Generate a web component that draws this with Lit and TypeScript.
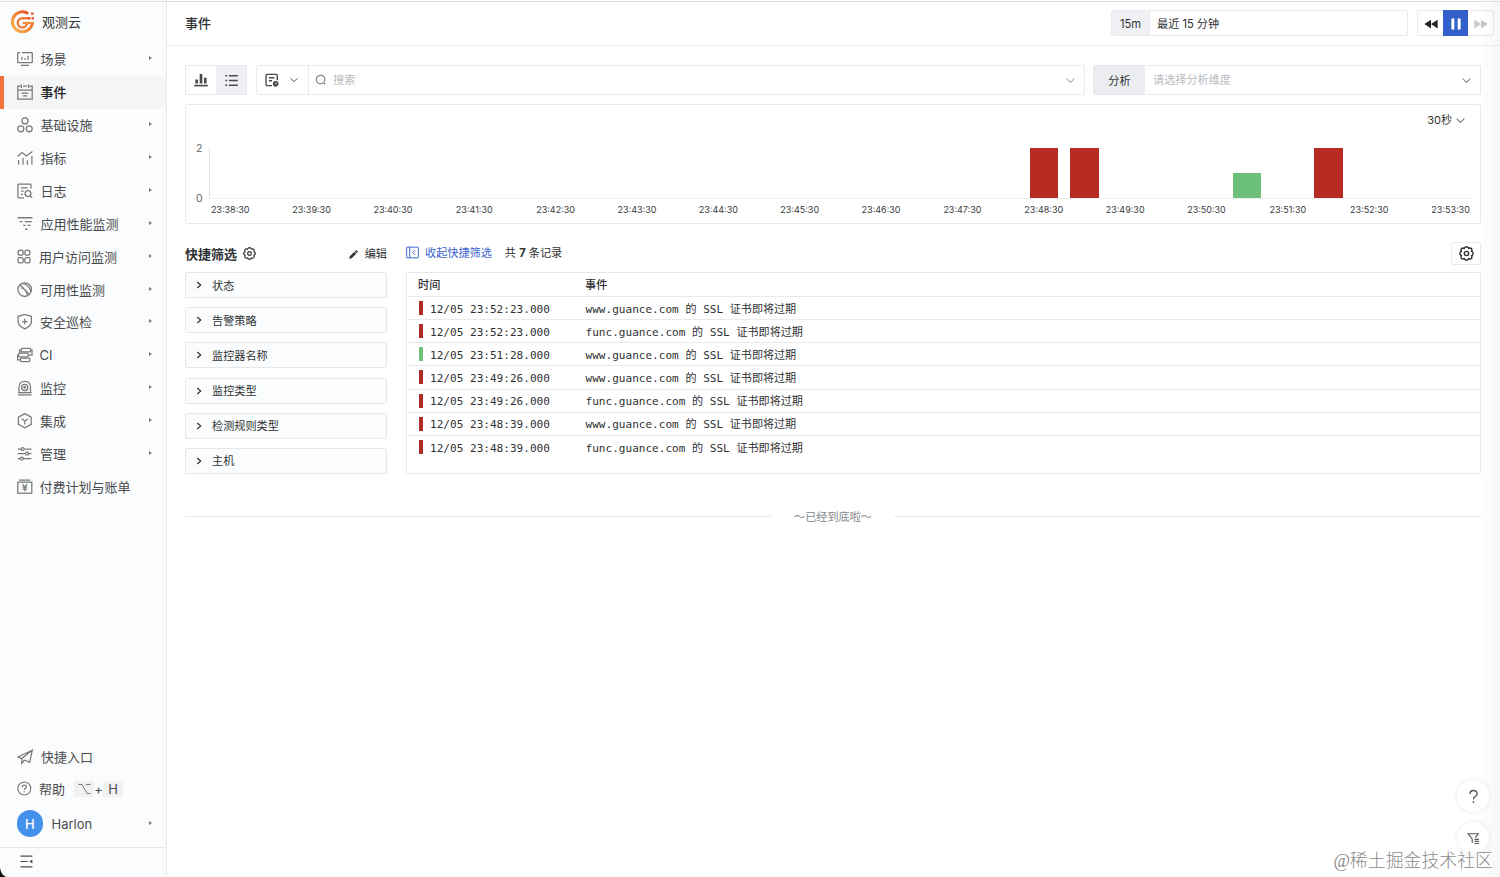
import { LitElement, html, css, svg, nothing } from "lit";
import { customElement, property } from "lit/decorators.js";

const ICONS: Record<string, unknown> = {
  scene: svg`<path d="M3.2 1.6H1.4Q.7 1.6.7 2.3V11Q.7 11.7 1.4 11.7H14.6Q15.3 11.7 15.3 11V2.3Q15.3 1.6 14.6 1.6H5"/><path d="M4.9 6v3M8 7.2V9M11.1 4.8V9M3.9 14.3H12"/>`,
  event: svg`<path d="M3.5 2.2H.8V15.2H15.2V2.2H12.6M6 2.2H10.2M.8 6H15.2M4.3.6V4M11.7.6V4M4.6 9H11.4M6 11.8H10"/>`,
  infra: svg`<circle cx="8" cy="3.9" r="3"/><circle cx="3.8" cy="11.8" r="3"/><circle cx="12.2" cy="11.8" r="3"/>`,
  metric: svg`<path d="M.5 6.5 5.2 2.6 9.3 6 15.4 1.6M1.6 10V14.8M6 8V14.8M10.4 10.2V14.8M14.9 6V14.8"/>`,
  log: svg`<path d="M7 14.8H1.6Q.9 14.8.9 14V2Q.9 1.2 1.7 1.2H13.2Q14 1.2 14 2V5.6M4 4.8H10.6M4 8.2H6.6M4 11.4H6"/><circle cx="11" cy="10.6" r="2.9"/><path d="M13.1 12.7 15.2 14.9"/>`,
  apm: svg`<path d="M.5 1.8H15.5M2.6 5.6H5.4M7.8 5.6H14.8M6.2 9.4H8.4M10.6 9.4H13.4M8 13.2H10.4" stroke-width="1.4"/>`,
  rum: svg`<circle cx="3.6" cy="3.7" r="2.6"/><circle cx="10.4" cy="3.7" r="2.6"/><rect x="1" y="8.7" width="5.2" height="5.2" rx="1.6"/><rect x="7.8" y="8.7" width="5.2" height="5.2" rx="1.6"/>`,
  avail: svg`<circle cx="7.7" cy="7.6" r="6.8"/><path d="M3 2.8 12.4 12.4M5.4 1.5Q12.8 3.1 13.9 10M4.3 5.6Q9.4 6.9 10.2 13.4"/>`,
  shield: svg`<path d="M7.8.5 14.4 2.3V7.6Q14.4 12.2 7.8 14.8 1.1 12.2 1.1 7.6V2.3ZM7.8 4.8V10.2M5.1 7.5H10.5"/>`,
  ci: svg`<rect x="4.2" y="1.3" width="9.4" height="3.6" rx="1"/><rect x="1.6" y="6.2" width="9.6" height="3.6" rx="1"/><rect x="3.4" y="11" width="9.4" height="3.6" rx="1"/><path d="M13.6 3H15V8H11.2M1.6 8H.6V12.8H3.4M4.2 3H2.6V6.2"/>`,
  monitor: svg`<path d="M2 12.5V7.3Q2 1.4 7.7 1.4 13.5 1.4 13.5 7.3V12.5M1 12.6H14.6M1 14.8H14.6"/><circle cx="7.7" cy="7.4" r="3.1"/><circle cx="7.7" cy="7.4" r=".8"/>`,
  integ: svg`<path d="M7.8.6 14.2 4.1V11.3L7.8 14.8 1.4 11.3V4.1ZM4.6 5.8 7.8 7.9 11 5.8M7.8 7.9V11.4"/>`,
  manage: svg`<path d="M.8 3H4M7.4 3H14.4M.8 7.7H8.4M11.8 7.7H14.4M.8 12.5H3.2M6.6 12.5H14.4"/><circle cx="5.7" cy="3" r="1.5"/><circle cx="10.1" cy="7.7" r="1.5"/><circle cx="4.9" cy="12.5" r="1.5"/>`,
  bill: svg`<rect x=".8" y="3.2" width="14" height="11"/><path d="M2.2 1.1H13.4M5.4 5.2 7.8 7.8 10.2 5.2M5.4 8.2H10.2M5.4 10.1H10.2M7.8 7.8V12.2"/>`,
  plane: svg`<path d="M15.2 1.2.9 7.9 4.8 9.6 15.2 1.2 12.7 13.4 7.6 11M4.8 9.6V14.4L7.6 11"/>`,
  help: svg`<circle cx="7.8" cy="8" r="6.9"/><path d="M5.6 6.6Q5.6 4.4 7.8 4.4 10 4.4 10 6.3 10 7.4 8.8 8 7.8 8.5 7.8 9.6M7.8 10.8V12.1" stroke-width="1.3"/>`,
  collapse: svg`<path d="M.6 1.4H15.2M.6 8H9.5M.6 14.6H15.2" stroke-width="1.5"/><path d="M15.2 5.6V10.4L11.4 8Z" fill="currentColor" stroke="none"/>`,
  bars: svg`<path d="M.2 14.4H15.8" stroke-width="1.9"/><path d="M3.1 7.4V12M8 1V12M12.9 5.4V12" stroke-width="3"/>`,
  list: svg`<path d="M4.8 2.2H15.8M4.8 8H15.8M4.8 13.8H15.8M.4 2.2H2.7M.4 8H2.7M.4 13.8H2.7" stroke-width="2"/>`,
  view: svg`<path d="M8 14.4H2.2Q1.2 14.4 1.2 13.4V2.6Q1.2 1.6 2.2 1.6H13Q14 1.6 14 2.6V8.4M4.4 5.4H10.8M4.4 8.8H8" stroke-width="1.6"/><circle cx="12.2" cy="12.4" r="3.2" fill="currentColor" stroke="none"/><path d="M12.2 10.8V12.4H13.8" stroke="#fff" stroke-width=".7"/>`,
  search: svg`<circle cx="7.4" cy="7.4" r="5.7" stroke-width="1.6"/><path d="M11.3 11.5 13.6 13.8" stroke-width="1.8"/>`,
  down: svg`<path d="M1.2 4.6 8 11.4 14.8 4.6" stroke-width="1.9"/>`,
  right: svg`<path d="M4.6 2 11.4 8 4.6 14" stroke-width="2.4"/>`,
  gear: svg`<path d="M6.3 1.6Q8 .2 9.7 1.6L10.3 2.6 11.6 2.2Q13.8 2.2 13.8 4.4L13.4 5.7 14.4 6.3Q15.8 8 14.4 9.7L13.4 10.3 13.8 11.6Q13.8 13.8 11.6 13.8L10.3 13.4 9.7 14.4Q8 15.8 6.3 14.4L5.7 13.4 4.4 13.8Q2.2 13.8 2.2 11.6L2.6 10.3 1.6 9.7Q.2 8 1.6 6.3L2.6 5.7 2.2 4.4Q2.2 2.2 4.4 2.2L5.7 2.6Z" stroke-width="1.5"/><circle cx="8" cy="8" r="2.3" stroke-width="1.5"/>`,
  pencil: svg`<path d="M.4 15.6 1.4 11.2 9.6 3 13 6.4 4.8 14.6ZM10.6 2 12 .6Q12.8 0 13.6.8L15.2 2.4Q16 3.2 15.4 4L14 5.4Z" fill="currentColor" stroke="none"/>`,
  fold: svg`<rect x=".8" y="1.4" width="14.4" height="13.2" rx=".6" stroke-width="1.2"/><path d="M4.6 1.4V14.6M11.2 5 8.2 8 11.2 11" stroke-width="1.2"/>`,
  rewind: svg`<path d="M8 3V13L.4 8ZM15.6 3V13L8 8Z" fill="currentColor" stroke="none"/>`,
  forward: svg`<path d="M8 3V13L15.6 8ZM.4 3V13L8 8Z" fill="currentColor" stroke="none"/>`,
  pause: svg`<path d="M4.4 1.6V14.4M11.6 1.6V14.4" stroke-width="3.4"/>`,
  filter: svg`<path d="M6.4 13.6V8.6L1.4 2.2H13.8L10.2 7M9.2 9H14.6M9.2 11.6H14.6M9.2 14.2H14.6" stroke-width="1.4"/>`,
  question: svg`<path d="M4.2 5.2Q4.2 1.6 8 1.6 11.8 1.6 11.8 5 11.8 6.8 9.8 8 8 9.1 8 11.2M8 13V14.8" stroke-width="1.5"/>`,
};

@customElement("ui-icon")
export class UiIcon extends LitElement {
  @property() name = "";
  @property({ type: Number }) size = 16;
  static styles = css`
    :host { display: inline-flex; flex: none; }
    .glyph { display: block; fill: none; stroke: currentColor; stroke-width: 1.25; }
  `;
  render() {
    return html`<svg class="glyph" width=${this.size} height=${this.size} viewBox="0 0 16 16">${ICONS[this.name]}</svg>`;
  }
}

const NAV: [string, string, boolean, number][] = [
  ["scene", "场景", true, 40.5],
  ["event", "事件", false, 40.5],
  ["infra", "基础设施", true, 40.5],
  ["metric", "指标", true, 40.5],
  ["log", "日志", true, 40.5],
  ["apm", "应用性能监测", true, 40.5],
  ["rum", "用户访问监测", true, 39],
  ["avail", "可用性监测", true, 40],
  ["shield", "安全巡检", true, 40],
  ["ci", "CI", true, 39.5],
  ["monitor", "监控", true, 40],
  ["integ", "集成", true, 40],
  ["manage", "管理", true, 40],
  ["bill", "付费计划与账单", false, 39.5],
];

@customElement("side-nav")
export class SideNav extends LitElement {
  static styles = css`
    :host { display: flex; flex-direction: column; box-sizing: border-box; width: 167px; height: 100%;
      padding-top: 1px; background: #fafcfd; border-right: 1px solid #e7e9eb; color: #4a4b4d; font-size: 13px; line-height: 18px; }
    .brand { display: flex; align-items: center; height: 42px; padding-left: 10px; gap: 7px; color: #333; }
    .items { display: flex; flex-direction: column; }
    .item { display: flex; align-items: center; box-sizing: border-box; height: 32.88px; padding: 0 14px 0 17px; }
    .item.active { background: linear-gradient(90deg, #f4733a 4px, #f4f5f7 4px); color: #222; font-weight: 500; }
    .item ui-icon, .help ui-icon, .quick ui-icon { color: #77797b; }
    .label { flex: 1; white-space: nowrap; }
    .arrow { width: 0; height: 0; border: 2.8px solid transparent; border-left: 3.4px solid #77797c; border-right: 0; margin-bottom: 2px; }
    .spacer { flex: 1; }
    .quick, .help { display: flex; align-items: center; height: 32px; padding-left: 17px; }
    .quick { gap: 8px; }
    .help { gap: 7px; }
    .keys { display: flex; align-items: center; margin-left: 2px; }
    .key { display: flex; align-items: center; justify-content: center; width: 20px; height: 16px; background: #f0f1f2; }
    .plus { width: 9px; text-align: center; font-size: 13px; }
    .user { display: flex; align-items: center; box-sizing: border-box; height: 42.5px; padding: 0 14px 4.5px 16.5px; }
    .avatar { display: flex; align-items: center; justify-content: center; width: 26.5px; height: 26.5px; border-radius: 50%;
      background: #4391ea; color: #fff; font-weight: 500; margin-right: 8.5px; }
    .foot { display: flex; align-items: center; box-sizing: border-box; height: 30px; padding: 0 0 2px 20px; border-top: 1px solid #e5e7e9; color: #4b4c4e; }
  `;
  render() {
    return html`
      <div class="brand">
        <svg width="25" height="25" viewBox="0 0 25 25" fill="none">
          <defs><linearGradient id="g" x1="0" y1="1" x2="1" y2="0"><stop offset="0" stop-color="#f9b64b"/><stop offset=".55" stop-color="#f08136"/><stop offset="1" stop-color="#e2442c"/></linearGradient></defs>
          <path d="M18.2 3.6A10 10 0 1 0 22.4 12.2" stroke="url(#g)" stroke-width="3"/>
          <path d="M18.6 8.3H12.4A4.6 4.6 0 1 0 17 13" stroke="#ee7d3a" stroke-width="2.5"/>
          <path d="M12.6 13H23.8" stroke="#f08a3c" stroke-width="2.3"/>
          <path d="M18 8.3H20.4M21.6 8.3H23.8M21 3.6H23.6" stroke="#e4502e" stroke-width="2.4"/>
        </svg>
        <span>观测云</span>
      </div>
      <div class="items">
        ${NAV.map(([icon, text, arrow, x]) => html`
          <div class="item ${icon === "event" ? "active" : ""}">
            <ui-icon name=${icon}></ui-icon>
            <span class="label" style="margin-left:${x - 33}px">${text}</span>
            ${arrow ? html`<i class="arrow"></i>` : nothing}
          </div>`)}
      </div>
      <div class="spacer"></div>
      <div class="quick"><ui-icon name="plane"></ui-icon><span>快捷入口</span></div>
      <div class="help"><ui-icon name="help" size="15"></ui-icon><span>帮助</span>
        <span class="keys"><span class="key"><svg width="13" height="12" viewBox="0 0 13 12" fill="none" stroke="#77797b"><path d="M.5 1.5H4L9 10.5H12.5M8 1.5H12.5"/></svg></span><span class="plus">+</span><span class="key">H</span></span>
      </div>
      <div class="user"><span class="avatar">H</span><span class="label">Harlon</span><i class="arrow"></i></div>
      <div class="foot"><ui-icon name="collapse" size="13"></ui-icon></div>
    `;
  }
}

const BARS: Record<number, [number, string]> = {
  20: [2, "critical"], 21: [2, "critical"], 25: [1, "ok"], 27: [2, "critical"],
};
const LABELS = Array.from({ length: 16 }, (_, i) => `23:${38 + i}:30`);

@customElement("event-chart")
export class EventChart extends LitElement {
  static styles = css`
    :host { display: flex; flex-direction: column; box-sizing: border-box; height: 120px; border: 1px solid #e8eaec;
      border-radius: 2px; padding: 0 9px 0 10px; }
    .step { display: flex; align-items: center; justify-content: flex-end; gap: 4px; height: 30px; padding-right: 6px; font-size: 11px; color: #333; }
    .step ui-icon { color: #777; }
    .body { display: flex; height: 63px; }
    .scale { display: flex; flex-direction: column; justify-content: space-between; width: 13px; padding-top: 7px; font-size: 10.6px; line-height: 14px; color: #65676a; box-sizing: border-box; height: 71px; }
    .plot { flex: 1; margin-top: 13px; height: 50px; border-left: 1px solid #e3e5e7; border-bottom: 1px solid #f0f1f3;
      display: grid; grid-template-columns: repeat(31, 1fr); align-items: end; }
    .slot { display: flex; justify-content: center; align-items: end; height: 50px; }
    .bar { width: 28.3px; }
    .critical { background: #b72b22; }
    .ok { background: #6cc07a; }
    .labels { display: flex; margin: 6px -20.3px 0 -6.5px; font-size: 9px; line-height: 12px; color: #38393b; }
    .labels span { flex: 1; text-align: center; }
  `;
  render() {
    return html`
      <div class="step"><span>30秒</span><ui-icon name="down" size="9"></ui-icon></div>
      <div class="body">
        <div class="scale"><span>2</span><span>0</span></div>
        <div class="plot">
          ${Array.from({ length: 31 }, (_, i) => html`<div class="slot">${BARS[i]
            ? html`<div class="bar ${BARS[i][1]}" style="height:${BARS[i][0] * 25}px"></div>` : nothing}</div>`)}
        </div>
      </div>
      <div class="labels">${LABELS.map((t) => html`<span>${t}</span>`)}</div>
    `;
  }
}

const FILTERS = ["状态", "告警策略", "监控器名称", "监控类型", "检测规则类型", "主机"];
const ROWS: [string, string, string][] = [
  ["critical", "23:52:23", "www"], ["critical", "23:52:23", "func"], ["ok", "23:51:28", "www"],
  ["critical", "23:49:26", "www"], ["critical", "23:49:26", "func"], ["critical", "23:48:39", "www"], ["critical", "23:48:39", "func"],
];

@customElement("app-root")
export class AppRoot extends LitElement {
  static styles = css`
    :host { display: flex; position: relative; width: 1500px; height: 877px; overflow: hidden; background: #fff;
      font-family: Inter, "Noto Sans CJK SC", sans-serif; font-size: 11.15px; line-height: 16px; color: #2f3133; }
    * { box-sizing: border-box; }
    .topline { position: absolute; left: 0; right: 0; top: 0; height: 2px; border-bottom: 1px solid #dcdddd; }
    .corner { position: absolute; left: 0; bottom: 0; width: 6px; height: 9px; background: #111; clip-path: polygon(0 0, 16% 40%, 45% 75%, 100% 100%, 0 100%); }
    .edge { position: absolute; right: 0; top: 0; bottom: 0; width: 22px; background: linear-gradient(90deg, transparent, rgba(0, 0, 0, .035)); pointer-events: none; }
    .main { flex: 1; min-width: 0; display: flex; flex-direction: column; }
    .header { display: flex; align-items: center; height: 46px; padding: 1px 6px 0 18px; border-bottom: 1px solid #eceef0; }
    .title { flex: 1; font-size: 13px; font-weight: 500; }
    .range { display: flex; width: 297px; height: 26px; border: 1px solid #e8eaec; border-radius: 2px; margin-right: 9px; }
    .tag { display: flex; align-items: center; justify-content: center; width: 38px; padding-top: 1px; background: #f0f1f4; border-right: 1px solid #e8eaec; }
    .value { display: flex; align-items: center; padding-left: 7px; padding-top: 1px; }
    .player { display: flex; height: 26px; border: 1px solid #e8eaec; border-radius: 2px; }
    .player span { display: flex; align-items: center; justify-content: center; width: 25px; height: 26px; margin-top: -1px; padding-top: 1px; color: #222; }
    .player .on { background: #335fca; color: #fff; }
    .player .off { color: #c4c6ca; }
    .content { padding: 19px 19px 0 18px; display: flex; flex-direction: column; }
    .toolbar { display: flex; height: 30px; }
    .toggle { display: flex; width: 62px; border: 1px solid #e6e8ea; margin-right: 9px; color: #4a4a4c; }
    .toggle span { flex: 1; display: flex; align-items: center; justify-content: center; }
    .toggle .on { background: #eff0f3; }
    .search { display: flex; align-items: center; width: 829px; border: 1px solid #e8eaec; border-radius: 2px; margin-right: 8px; }
    .picker { display: flex; align-items: center; gap: 11px; width: 52px; height: 28px; padding-left: 8px; border-right: 1px solid #e8eaec; color: #4a4a4c; }
    .hint { flex: 1; color: #b9bbbe; }
    .search .lens { margin: 0 6px 0 6px; color: #888; }
    .tail { color: #888; margin-right: 9px; }
    .search .tail { color: #aaa; }
    .analyze { display: flex; align-items: center; flex: 1; border: 1px solid #e8eaec; border-radius: 2px; }
    .analyze .name { display: flex; align-items: center; justify-content: center; width: 51px; height: 28px; background: #ebedf0; margin-right: 8px; padding-top: 2px; }
    event-chart { margin-top: 9px; }
    .cols { display: flex; margin-top: 18px; gap: 19px; }
    .facets { width: 202px; }
    .fhead { display: flex; align-items: center; height: 30px; padding-bottom: 7px; font-size: 13px; }
    .fhead strong { font-weight: 700; margin-right: 6px; }
    .edit { display: flex; align-items: center; gap: 7px; margin-left: auto; font-size: 11.15px; padding-top: 1px; }
    .facet { display: flex; align-items: center; height: 26px; border: 1px solid #e5e8ea; border-radius: 2px; background: #fafcfd; padding-left: 9px; gap: 9px; margin-bottom: 9.2px; }
    .facet span { padding-top: 1px; }
    .facet:last-child { margin-bottom: 0; }
    .records { flex: 1; min-width: 0; }
    .rhead { display: flex; align-items: center; height: 30px; }
    .rhead .fold { display: flex; align-items: center; gap: 6px; color: #3b63cd; margin-right: 13px; padding-bottom: 9px; }
    .rhead .fold ui-icon { padding-bottom: 1px; }
    .rhead .count { padding-bottom: 9px; }
    .config { display: flex; align-items: center; justify-content: center; width: 30px; height: 23px; border: 1px solid #e8eaec; border-radius: 2px; margin-left: auto; margin-bottom: 7px; }
    .table { height: 202px; border: 1px solid #e6e8ea; border-radius: 2px; }
    .th { display: grid; grid-template-columns: 167px 1fr; align-items: center; height: 24px; padding-left: 11px; border-bottom: 1px solid #e8eaec; font-weight: 500; }
    .tr { display: grid; grid-template-columns: 4px 162.5px 1fr; align-items: center; height: 23.15px; padding-left: 12px; border-bottom: 1px solid #e8eaec;
      font-family: "DejaVu Sans Mono", "Noto Sans CJK SC", monospace; font-size: 11.07px; line-height: 18px; white-space: pre; }
    .tr span { padding-top: 3px; }
    .tr:last-child { border-bottom: 0; }
    .mark { height: 14px; }
    .critical { background: #ae2c27; }
    .ok { background: #6cc07a; }
    .time { padding-left: 7px; }
    .end { display: flex; align-items: center; gap: 22px; margin-top: 34px; height: 17px; color: #85878a; }
    .end::before, .end::after { content: ""; flex: 1; height: 1px; background: #e8eaec; }
    .float { position: absolute; display: flex; align-items: center; justify-content: center; left: 1457px; width: 32px; height: 32px; border-radius: 50%; background: #fff; box-shadow: 0 0 5px rgba(0, 0, 0, .1); color: #555; }
    .ask { top: 780px; }
    .funnel { top: 822px; }
    .watermark { position: absolute; right: 7px; top: 848px; font: 300 17.9px/26px "Liberation Serif", "Noto Sans CJK SC", serif; color: #8b8b8b; white-space: nowrap; text-shadow: 0 0 1px #fff; }
  `;
  render() {
    return html`
      <side-nav></side-nav>
      <div class="main">
        <div class="header">
          <span class="title">事件</span>
          <div class="range"><span class="tag">15m</span><span class="value">最近 15 分钟</span></div>
          <div class="player"><span><ui-icon name="rewind" size="14"></ui-icon></span><span class="on"><ui-icon name="pause" size="14"></ui-icon></span><span class="off"><ui-icon name="forward" size="14"></ui-icon></span></div>
        </div>
        <div class="content">
          <div class="toolbar">
            <div class="toggle"><span><ui-icon name="bars" size="14"></ui-icon></span><span class="on"><ui-icon name="list" size="13"></ui-icon></span></div>
            <div class="search">
              <div class="picker"><ui-icon name="view" size="14"></ui-icon><ui-icon name="down" size="8"></ui-icon></div>
              <ui-icon class="lens" name="search" size="12"></ui-icon>
              <span class="hint">搜索</span>
              <ui-icon class="tail" name="down" size="9"></ui-icon>
            </div>
            <div class="analyze"><span class="name">分析</span><span class="hint">请选择分析维度</span><ui-icon class="tail" name="down" size="9"></ui-icon></div>
          </div>
          <event-chart></event-chart>
          <div class="cols">
            <div class="facets">
              <div class="fhead"><strong>快捷筛选</strong><ui-icon name="gear" size="13"></ui-icon>
                <span class="edit"><ui-icon name="pencil" size="9"></ui-icon>编辑</span></div>
              ${FILTERS.map((f) => html`<div class="facet"><ui-icon name="right" size="8"></ui-icon><span>${f}</span></div>`)}
            </div>
            <div class="records">
              <div class="rhead">
                <span class="fold"><ui-icon name="fold" size="13"></ui-icon>收起快捷筛选</span>
                <span class="count">共 <b>7</b> 条记录</span>
                <span class="config"><ui-icon name="gear" size="15"></ui-icon></span>
              </div>
              <div class="table">
                <div class="th"><span>时间</span><span>事件</span></div>
                ${ROWS.map(([s, t, h]) => html`<div class="tr"><i class="mark ${s}"></i><span class="time">12/05 ${t}.000</span><span>${h}.guance.com 的 SSL 证书即将过期</span></div>`)}
              </div>
            </div>
          </div>
          <div class="end">～已经到底啦～</div>
        </div>
      </div>
      <div class="edge"></div>
      <div class="topline"></div>
      <div class="corner"></div>
      <div class="float ask"><ui-icon name="question" size="15"></ui-icon></div>
      <div class="float funnel"><ui-icon name="filter" size="13"></ui-icon></div>
      <div class="watermark">@稀土掘金技术社区</div>
    `;
  }
}
